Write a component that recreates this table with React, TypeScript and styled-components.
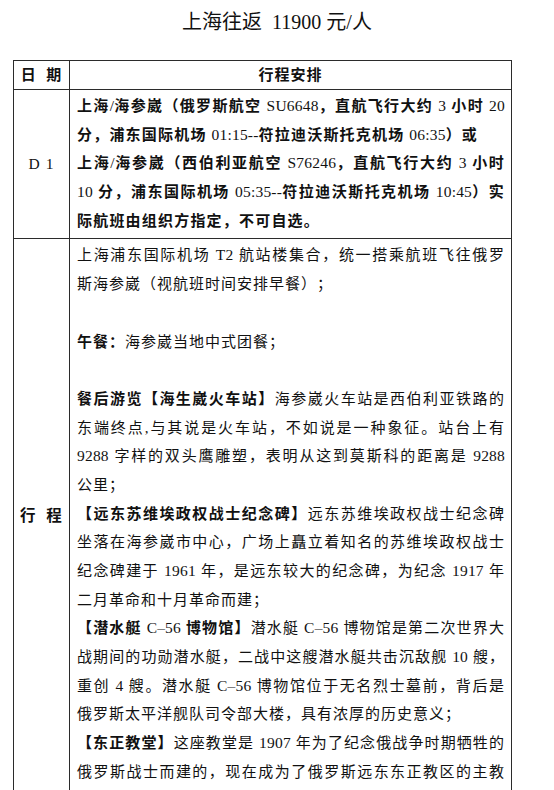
import React from "react";
import styled, { createGlobalStyle } from "styled-components";

const Global = createGlobalStyle`
  html, body { margin: 0; padding: 0; background: #fff; }
  body {
    font-family: "Liberation Serif", "Noto Sans CJK SC", serif;
    color: #111;
    text-spacing-trim: space-all;
  }
`;

const Page = styled.div`
  width: 554px;
  min-height: 790px;
  background: #fff;
`;

const Title = styled.h1`
  margin: 0;
  height: 60px;
  padding-top: 8px;
  box-sizing: border-box;
  text-align: center;
  font-size: 20px;
  line-height: 28px;
  font-weight: 400;
  color: #111;
  white-space: pre;
`;

const Table = styled.table`
  margin-left: 13px;
  width: 499px;
  border-collapse: collapse;
  table-layout: fixed;
`;

const DateCol = styled.col`
  width: 56px;
`;

const HeadCell = styled.th`
  border: 1px solid #2b2b2b;
  height: 28px;
  padding: 0;
  font-size: 15px;
  line-height: 28px;
  font-weight: 700;
  text-align: center;
  vertical-align: middle;
  white-space: pre;
  letter-spacing: 1px;
`;

const SideCell = styled.td<{ $bold?: boolean }>`
  border: 1px solid #2b2b2b;
  padding: 0;
  text-align: center;
  vertical-align: middle;
  font-size: 15.5px;
  font-weight: ${(p) => (p.$bold ? 700 : 400)};
  white-space: pre;
  letter-spacing: 1px;
`;

const BodyCell = styled.td`
  border: 1px solid #2b2b2b;
  padding: 2px 6px 3px 7px;
  vertical-align: top;
`;

const Line = styled.div<{ $fill?: boolean; $bold?: boolean }>`
  font-size: 15px;
  line-height: 28.7px;
  height: 28.7px;
  letter-spacing: ${(p) => (p.$bold ? "1.2px" : "1px")};
  font-weight: ${(p) => (p.$bold ? 700 : 400)};
  text-align: justify;
  text-align-last: ${(p) => (p.$fill ? "justify" : "left")};
  text-spacing-trim: space-all;
`;

const Strong = styled.span`
  font-weight: 700;
`;

const Latin = styled.span`
  font-weight: 400;
  font-size: 15.5px;
  letter-spacing: 0.2px;
`;

const LATIN = /([A-Za-z0-9:\-\/–.]+)/;

function mix(text: string) {
  return text.split(LATIN).map((part, i) =>
    i % 2 === 1 ? <Latin key={i}>{part}</Latin> : <React.Fragment key={i}>{part}</React.Fragment>
  );
}

type Seg = { b?: boolean; t: string };
type L = { fill?: boolean; segs: Seg[] };

const flightLines: L[] = [
  { fill: true, segs: [{ t: "上海/海参崴（俄罗斯航空 SU6648，直航飞行大约 3 小时 20" }] },
  { segs: [{ t: "分，浦东国际机场 01:15--符拉迪沃斯托克机场 06:35）或" }] },
  { fill: true, segs: [{ t: "上海/海参崴（西伯利亚航空 S76246，直航飞行大约 3 小时" }] },
  { fill: true, segs: [{ t: "10 分，浦东国际机场 05:35--符拉迪沃斯托克机场 10:45）实" }] },
  { segs: [{ t: "际航班由组织方指定，不可自选。" }] },
];

const tourLines: (L | null)[] = [
  { fill: true, segs: [{ t: "上海浦东国际机场 T2 航站楼集合，统一搭乘航班飞往俄罗" }] },
  { segs: [{ t: "斯海参崴（视航班时间安排早餐）；" }] },
  null,
  { segs: [{ b: true, t: "午餐：" }, { t: "海参崴当地中式团餐；" }] },
  null,
  { fill: true, segs: [{ b: true, t: "餐后游览【海生崴火车站】" }, { t: "海参崴火车站是西伯利亚铁路的" }] },
  { fill: true, segs: [{ t: "东端终点,与其说是火车站，不如说是一种象征。站台上有" }] },
  { fill: true, segs: [{ t: "9288 字样的双头鹰雕塑，表明从这到莫斯科的距离是 9288" }] },
  { segs: [{ t: "公里；" }] },
  { fill: true, segs: [{ b: true, t: "【远东苏维埃政权战士纪念碑】" }, { t: "远东苏维埃政权战士纪念碑" }] },
  { fill: true, segs: [{ t: "坐落在海参崴市中心，广场上矗立着知名的苏维埃政权战士" }] },
  { fill: true, segs: [{ t: "纪念碑建于 1961 年，是远东较大的纪念碑，为纪念 1917 年" }] },
  { segs: [{ t: "二月革命和十月革命而建；" }] },
  { fill: true, segs: [{ b: true, t: "【潜水艇 C–56 博物馆】" }, { t: "潜水艇 C–56 博物馆是第二次世界大" }] },
  { fill: true, segs: [{ t: "战期间的功勋潜水艇，二战中这艘潜水艇共击沉敌舰 10 艘，" }] },
  { fill: true, segs: [{ t: "重创 4 艘。潜水艇 C–56 博物馆位于无名烈士墓前，背后是" }] },
  { segs: [{ t: "俄罗斯太平洋舰队司令部大楼，具有浓厚的历史意义；" }] },
  { fill: true, segs: [{ b: true, t: "【东正教堂】" }, { t: "这座教堂是 1907 年为了纪念俄战争时期牺牲的" }] },
  { fill: true, segs: [{ t: "俄罗斯战士而建的，现在成为了俄罗斯远东东正教区的主教" }] },
];

function renderLine(l: L | null, i: number, bold?: boolean) {
  if (!l) return <Line key={i}>{"\u00a0"}</Line>;
  return (
    <Line key={i} $fill={l.fill} $bold={bold}>
      {l.segs.map((s, j) =>
        s.b ? <Strong key={j}>{mix(s.t)}</Strong> : <React.Fragment key={j}>{mix(s.t)}</React.Fragment>
      )}
    </Line>
  );
}

export default function App() {
  return (
    <Page>
      <Global />
      <Title>上海往返  11900 元/人</Title>
      <Table>
        <colgroup>
          <DateCol />
          <col />
        </colgroup>
        <thead>
          <tr>
            <HeadCell>日  期</HeadCell>
            <HeadCell>行程安排</HeadCell>
          </tr>
        </thead>
        <tbody>
          <tr>
            <SideCell>D 1</SideCell>
            <BodyCell>{flightLines.map((l, i) => renderLine(l, i, true))}</BodyCell>
          </tr>
          <tr>
            <SideCell $bold>行  程</SideCell>
            <BodyCell>{tourLines.map((l, i) => renderLine(l, i))}</BodyCell>
          </tr>
        </tbody>
      </Table>
    </Page>
  );
}
